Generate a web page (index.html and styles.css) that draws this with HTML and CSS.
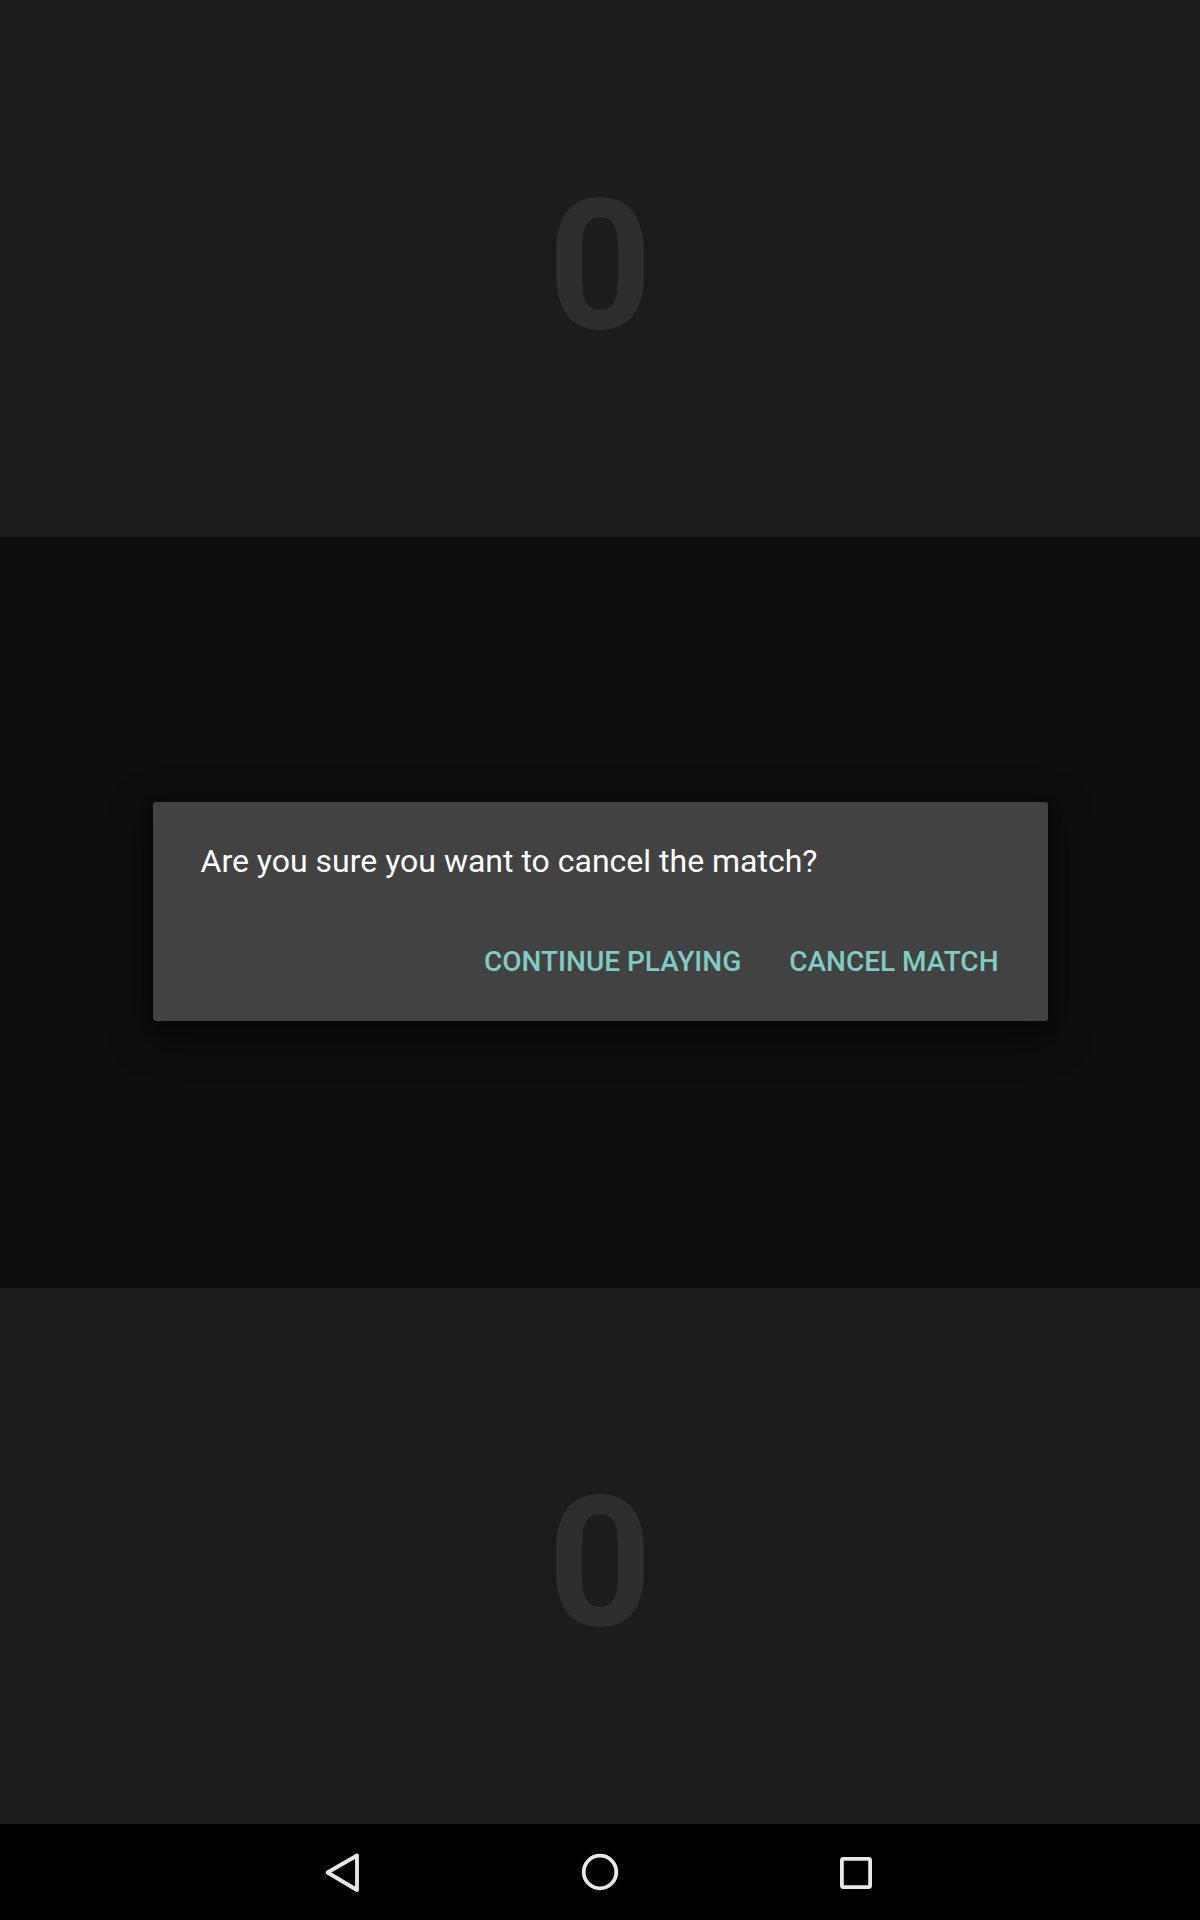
FILE: index.html
```html
<!DOCTYPE html>
<html>
<head>
<meta charset="utf-8">
<link rel="stylesheet" href="styles.css">
</head>
<body>
<div class="screen">
  <section class="score score-top"><span class="digit">0</span></section>
  <section class="middle">
    <div class="dialog">
      <p class="message">Are you sure you want to cancel the match?</p>
      <div class="actions">
        <span class="btn">CONTINUE PLAYING</span>
        <span class="btn">CANCEL MATCH</span>
      </div>
    </div>
  </section>
  <section class="score score-bottom"><span class="digit">0</span></section>
  <nav class="navbar">
    <svg class="nav-icon" width="40" height="40" viewBox="0 0 40 40"><path d="M33 3.5 L33 38 L3.5 20.5 Z" fill="none" stroke="#e8e8e8" stroke-width="3.8" stroke-linejoin="round"/></svg>
    <svg class="nav-icon" width="40" height="40" viewBox="0 0 40 40"><circle cx="20" cy="20" r="16.3" fill="none" stroke="#e8e8e8" stroke-width="3.8"/></svg>
    <svg class="nav-icon" width="40" height="40" viewBox="0 0 40 40"><rect x="5.9" y="6.9" width="28.2" height="28.2" rx="1.5" fill="none" stroke="#e8e8e8" stroke-width="3.8"/></svg>
  </nav>
</div>
</body>
</html>
```

FILE: styles.css
```css
html, body {
  margin: 0;
  padding: 0;
  background: #000;
}
.screen {
  width: 1200px;
  height: 1920px;
  display: flex;
  flex-direction: column;
  font-family: Roboto, "Noto Sans", sans-serif;
}
.score {
  background: #1c1c1c;
  height: 537px;
  display: flex;
  align-items: center;
  justify-content: center;
  box-sizing: border-box;
}
.score-top {
  transform: rotate(180deg);
}
.score-bottom {
  height: 536px;
}
.digit {
  font-size: 182px;
  font-weight: 700;
  line-height: 1;
  color: #2e2e2e;
  padding-top: 14px;
}
.middle {
  background: #0e0e0e;
  height: 751px;
  display: flex;
  justify-content: center;
  padding-top: 265px;
  box-sizing: border-box;
}
.dialog {
  width: 895px;
  height: 219px;
  box-sizing: border-box;
  background: #424242;
  border-radius: 3px;
  box-shadow: 0 12px 40px rgba(0, 0, 0, 0.55), 0 4px 12px rgba(0, 0, 0, 0.4);
  padding: 37px 49px 0 48px;
}
.message {
  margin: 0;
  font-size: 32px;
  line-height: 44px;
  color: #ffffff;
}
.actions {
  margin-top: 61px;
  display: flex;
  justify-content: flex-end;
  gap: 48px;
}
.btn {
  font-size: 28px;
  font-weight: 500;
  line-height: 36px;
  color: #80cbc4;
}
.navbar {
  height: 96px;
  background: #000;
  display: flex;
  align-items: center;
  justify-content: center;
  gap: 216px;
}
.nav-icon {
  display: block;
}
```
